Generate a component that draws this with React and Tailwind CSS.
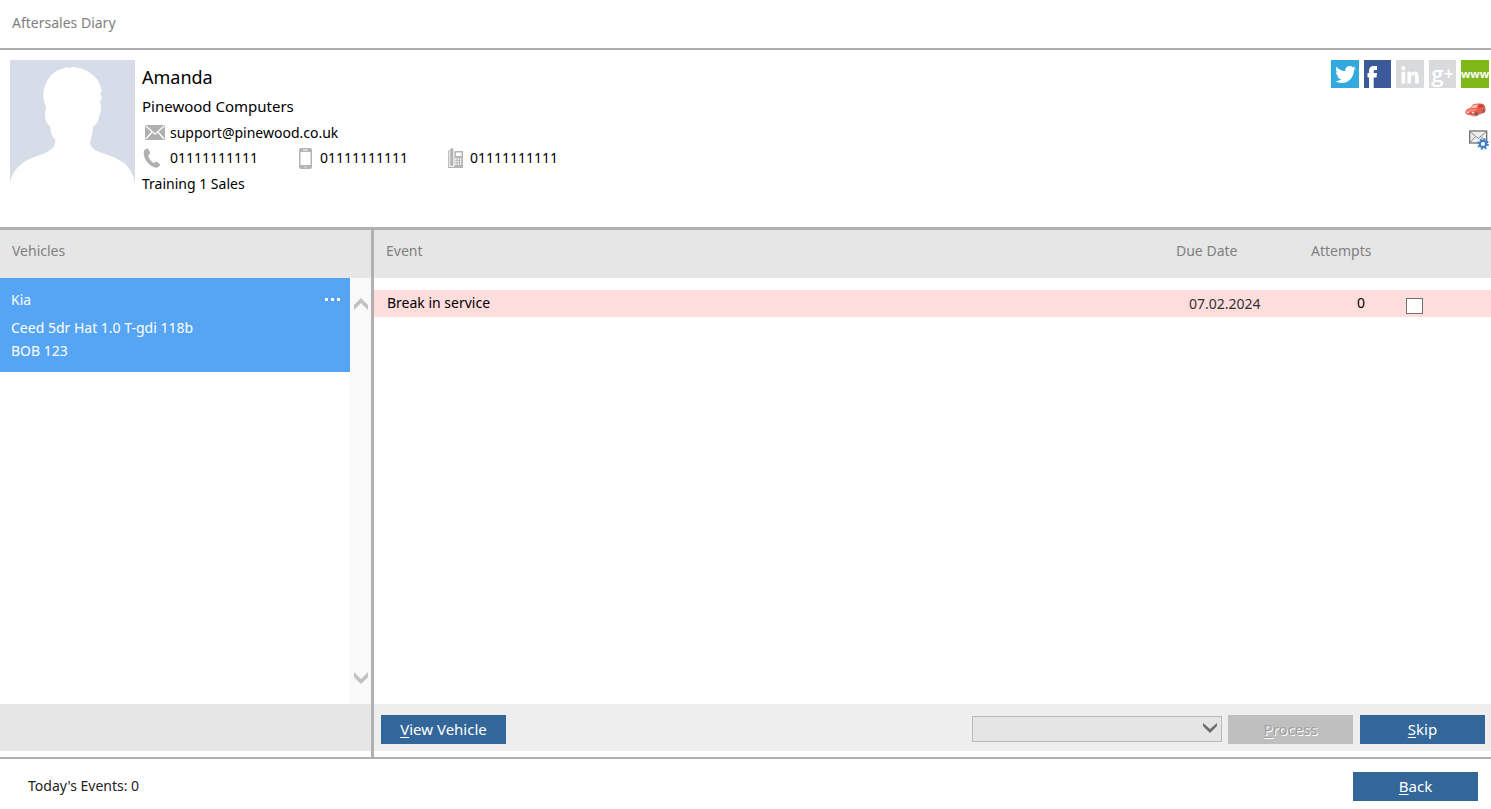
import React from "react";
import { FaTwitter, FaLinkedinIn } from "react-icons/fa";

function Avatar() {
  return (
    <svg viewBox="0 0 125 125" className="h-[125px] w-[125px] shrink-0" role="img" aria-label="Contact photo">
      <rect width="125" height="125" fill="#d6dde8" />
      <path
        fill="#fff"
        d="M0 125V123C2 113 7 107 14 102C21 97 33 95 39 91C44 88 46 84 45 79C41 76 41 71 40 66C37 64 35 60 35 54L36 46C32 40 33 30 36 23C40 15 46 10 52 9L56 7L59 8L62 7C70 7 80 11 86 18C91 24 91 30 92 31L90 34L92 38L90 41C92 47 91 52 89 57C88 62 86 65 83 67C83 73 81 78 80 83C81 88 86 91 92 93C104 97 113 101 118 107C122 112 124 118 125 123V125Z"
      />
    </svg>
  );
}

function MailIcon() {
  return (
    <svg viewBox="0 0 20 15" className="h-[15px] w-5" aria-hidden="true">
      <rect width="20" height="15" fill="#b0b0b0" />
      <path d="M.5 .8L10 9.2L19.500 .8M.8 14L7 7M19.200 14L13 7" fill="none" stroke="#fff" strokeWidth="1.300" />
    </svg>
  );
}

function PhoneIcon() {
  return (
    <svg viewBox="0 0 18 20" className="h-5 w-[18px]" aria-hidden="true">
      <path
        fill="#b0b0b0"
        d="M1 2.500C2 1 3.500.3 5 .4L7.300 5C7.500 5.800 5.500 7 5.300 7.500C5.500 10 8.500 14 10.800 15C11.600 15 12.500 13.300 13.500 13.500L17 16.200C17.200 17.500 15.500 19.500 13.500 19.700C7 19.500 -1 10 1 2.500Z"
      />
    </svg>
  );
}

function MobileIcon() {
  return (
    <svg viewBox="0 0 13 21" className="h-[21px] w-[13px]" aria-hidden="true">
      <rect width="13" height="21" rx="2" fill="#b4b4b4" />
      <rect x="1.500" y="4" width="10" height="13" fill="#fff" />
      <path d="M4 2H9" stroke="#fff" />
      <path d="M5 19H8" stroke="#ddd" />
    </svg>
  );
}

function OfficePhoneIcon() {
  return (
    <svg viewBox="0 0 15 21" className="h-[21px] w-[15px]" aria-hidden="true">
      <rect y="2" width="1.500" height="18" fill="#c4c4c4" />
      <rect x="2.200" width="3.200" height="18" rx="1.500" fill="#b4b4b4" />
      <path d="M6.500 3H15V20H0V18.800H6.500Z" fill="#b4b4b4" />
      <rect x="8" y="4.500" width="5.500" height="3.500" fill="#fff" />
      <path d="M7 11H14M7 13.500H14M7 16H14" stroke="#fff" strokeWidth="1.400" strokeDasharray="1.500 1" />
    </svg>
  );
}

function FacebookIcon() {
  return (
    <svg viewBox="0 0 27 28" className="h-7 w-[27px]" aria-hidden="true">
      <path d="M5 28V17.500H3.500V13H5V11C5 7.500 6.800 6 10 6H13V10H11C10 10 9.700 10.500 9.700 11.500V13H13L12.500 17.500H9.700V28Z" fill="#fff" />
    </svg>
  );
}

function CarIcon() {
  return (
    <svg viewBox="0 0 21 15" className="h-[15px] w-[21px]" aria-hidden="true">
      <path d="M1 11L9 14L20 10L19 8L2 9Z" fill="#cfcfcf" />
      <path d="M.5 8C1.500 6 4 5.300 5.500 5C7 2 8.500 1 11 .8C14 .3 17.500 .6 18.800 1.500C20 3 20.700 5 20.500 8L19 9.500L10 12.800L2 11.500L.4 10Z" fill="#ea5a4a" />
      <path d="M1.500 7.500C4 5.500 8 5.500 12 6L9 8.500L2 9Z" fill="#f58a7c" />
      <path d="M6 5L8.500 2L13 1.500L11.500 5Z" fill="#f7c0b8" />
      <path d="M13.500 4.800L14.300 1.800L17.500 1.800L19 4Z" fill="#b8463c" />
      <path d="M1.500 9L4 9.700M7 10L9 9.200" stroke="#fff" />
      <ellipse cx="11.500" cy="11" rx="1.400" ry="2" fill="#666" />
      <ellipse cx="18.700" cy="8" rx="1" ry="1.700" fill="#666" />
    </svg>
  );
}

function MailSettingsIcon() {
  return (
    <svg viewBox="0 0 20 20" className="h-5 w-5" aria-hidden="true">
      <rect x=".7" y="1" width="17" height="12" fill="#eee" stroke="#666" strokeWidth="1.200" />
      <path d="M1 1.500L9.200 8.500L17.500 1.500M1 12.500L6.500 6.500M12 6.500L17 12" fill="none" stroke="#888" />
      <circle cx="14" cy="14" r="4.900" fill="none" stroke="#3f7fc8" strokeWidth="1.800" strokeDasharray="1.950 1.900" />
      <circle cx="14" cy="14" r="3.200" fill="#fff" stroke="#3f7fc8" strokeWidth="2.200" />
    </svg>
  );
}

function Chevron({ up = false }) {
  return (
    <svg viewBox="0 0 14 12" className="h-3 w-[14px]" aria-hidden="true">
      {up ? (
        <path d="M0 7L7 0L14 7V12L7 5L0 12Z" fill="#c1c1c1" />
      ) : (
        <path d="M0 0L7 7L14 0V5L7 12L0 5Z" fill="#c1c1c1" />
      )}
    </svg>
  );
}

function ActionButton({ label }) {
  return (
    <button
      type="button"
      className="h-[29px] w-[125px] shrink-0 bg-[#336699] text-center text-[15px] leading-[29px] text-white"
    >
      <span className="underline underline-offset-2">{label[0]}</span>
      {label.slice(1)}
    </button>
  );
}

const social = "flex h-7 items-center justify-center text-white";

export default function App() {
  return (
    <div className="flex min-h-screen flex-col bg-white font-['Noto_Sans','DejaVu_Sans_Condensed',sans-serif] text-sm leading-5 text-black">
      <header className="flex h-[50px] items-center border-b-2 border-[#b0b0b0] px-3 pb-[2px]">
        <h1 className="text-sm text-[#808080]">Aftersales Diary</h1>
      </header>

      <section className="flex h-[180px] items-start border-b-3 border-[#b0b0b0] pt-[10px] pr-[2px] pl-[10px]">
        <Avatar />
        <div className="ml-[7px] flex-1">
          <h2 className="mt-1 text-lg leading-[26px]">Amanda</h2>
          <p className="mt-1 text-[15px] leading-6">Pinewood Computers</p>
          <div className="mt-[2px] flex h-[25px] items-center">
            <span className="w-7 pl-[3px]"><MailIcon /></span>
            <a href="mailto:support@pinewood.co.uk">support@pinewood.co.uk</a>
          </div>
          <div className="flex h-[26px] items-center">
            <span className="w-7 pl-[1px]"><PhoneIcon /></span>
            <a href="tel:01111111111" className="w-[122px]">01111111111</a>
            <span className="w-7 pl-[7px]"><MobileIcon /></span>
            <a href="tel:01111111111" className="w-[122px]">01111111111</a>
            <span className="w-7 pl-[6px]"><OfficePhoneIcon /></span>
            <a href="tel:01111111111">01111111111</a>
          </div>
          <p className="mt-[3px]">Training 1 Sales</p>
        </div>
        <nav className="flex flex-col items-end" aria-label="Contact links">
          <div className="flex gap-[5px]">
            <a href="#twitter" aria-label="Twitter" className={`${social} w-7 bg-[#33aadd]`}><FaTwitter size={21} /></a>
            <a href="#facebook" aria-label="Facebook" className={`${social} w-[27px] bg-[#3b5998]`}><FacebookIcon /></a>
            <a href="#linkedin" aria-label="LinkedIn" className={`${social} w-7 bg-[#d9dadb] pt-1`}><FaLinkedinIn size={20} /></a>
            <a href="#google" aria-label="Google Plus" className={`${social} w-[27px] bg-[#d9dadb] font-['Open_Sans',sans-serif] text-[22px] leading-6 font-semibold`}><span className="pb-[2px]">g</span><span className="pb-[2px] text-lg leading-6">+</span></a>
            <a href="#website" className={`${social} w-7 bg-[#80b719] font-['Open_Sans',sans-serif] text-[11px] font-bold`}>www</a>
          </div>
          <a href="#vehicle" aria-label="Vehicle" className="mt-[15px] mr-[3px]"><CarIcon /></a>
          <a href="#mail" aria-label="Mail settings" className="mt-3"><MailSettingsIcon /></a>
        </nav>
      </section>

      <main className="flex flex-1 border-b-2 border-[#b0b0b0]">
        <aside className="flex w-[374px] shrink-0 flex-col border-r-3 border-[#b0b0b0] pb-[6px]">
          <h2 className="h-12 bg-[#e6e6e6] px-3 pt-[11px] text-sm text-[#808080]">Vehicles</h2>
          <div className="flex flex-1">
            <div className="flex-1">
              <article className="h-[94px] bg-[#56a4f4] pt-3 pr-[10px] pl-[11px] text-white">
                <div className="flex items-center justify-between">
                  <h3>Kia</h3>
                  <button type="button" aria-label="Vehicle options" className="flex h-5 items-start gap-[3px] pt-2">
                    <i className="h-[3px] w-[3px] bg-white" />
                    <i className="h-[3px] w-[3px] bg-white" />
                    <i className="h-[3px] w-[3px] bg-white" />
                  </button>
                </div>
                <p className="mt-2 whitespace-nowrap">Ceed 5dr Hat 1.0 T-gdi 118b</p>
                <p className="mt-[3px]">BOB 123</p>
              </article>
            </div>
            <div className="flex w-[21px] flex-col items-center justify-between bg-[#f9f9f9] pt-5 pb-5">
              <button type="button" aria-label="Scroll up"><Chevron up /></button>
              <button type="button" aria-label="Scroll down"><Chevron /></button>
            </div>
          </div>
          <div className="h-[47px] bg-[#e6e6e6]" />
        </aside>

        <section className="flex flex-1 flex-col pb-[6px]">
          <div className="flex-1">
            <table className="w-full table-fixed text-left">
              <thead>
                <tr className="h-12 bg-[#e6e6e6] align-top text-[#808080]">
                  <th className="px-3 pt-[11px] font-normal">Event</th>
                  <th className="w-[135px] px-3 pt-[11px] font-normal">Due Date</th>
                  <th className="w-[91px] px-3 pt-[11px] font-normal">Attempts</th>
                  <th className="w-[101px]" aria-label="Select" />
                </tr>
              </thead>
              <tbody>
                <tr className="h-3" aria-hidden="true"><td colSpan={4} /></tr>
                <tr className="h-[27px] bg-[#ffdddd]">
                  <td className="pb-[2px] pl-[13px]">Break in service</td>
                  <td className="pl-[25px] text-[#333]">07.02.2024</td>
                  <td className="pr-[25px] pb-[2px] text-right">0</td>
                  <td className="pt-1 pl-4">
                    <input
                      type="checkbox"
                      aria-label="Select Break in service"
                      className="block h-4 w-[17px] appearance-none border border-[#707070] bg-white checked:bg-[#336699]"
                    />
                  </td>
                </tr>
              </tbody>
            </table>
          </div>
          <div className="flex h-[47px] items-center bg-[#eeeeee] pt-1 pr-[6px] pl-[7px]">
            <ActionButton label="View Vehicle" />
            <div className="relative ml-auto pb-[2px]">
              <select
                disabled
                aria-label="Action"
                className="block h-[26px] w-[250px] appearance-none border border-[#bababa] bg-[#e5e5e5]"
              />
              <svg viewBox="0 0 14 10" className="pointer-events-none absolute top-[7px] right-[5px] h-[10px] w-[14px]" aria-hidden="true">
                <path d="M0 0L7 6L14 0V3L7 10L0 3Z" fill="#6d6d6d" />
              </svg>
            </div>
            <button
              type="button"
              disabled
              className="mr-[7px] ml-[6px] h-[29px] w-[125px] bg-[#bfbfbf] text-center text-[15px] leading-[29px] text-[#a0a0a0] [text-shadow:1px_1px_0_#fff]"
            >
              <span className="underline underline-offset-2">P</span>rocess
            </button>
            <ActionButton label="Skip" />
          </div>
        </section>
      </main>

      <footer className="flex h-[50px] items-center justify-between pt-[5px] pr-[13px] pl-7">
        <p className="pb-[2px] text-[#222]">Today's Events: 0</p>
        <ActionButton label="Back" />
      </footer>
    </div>
  );
}
